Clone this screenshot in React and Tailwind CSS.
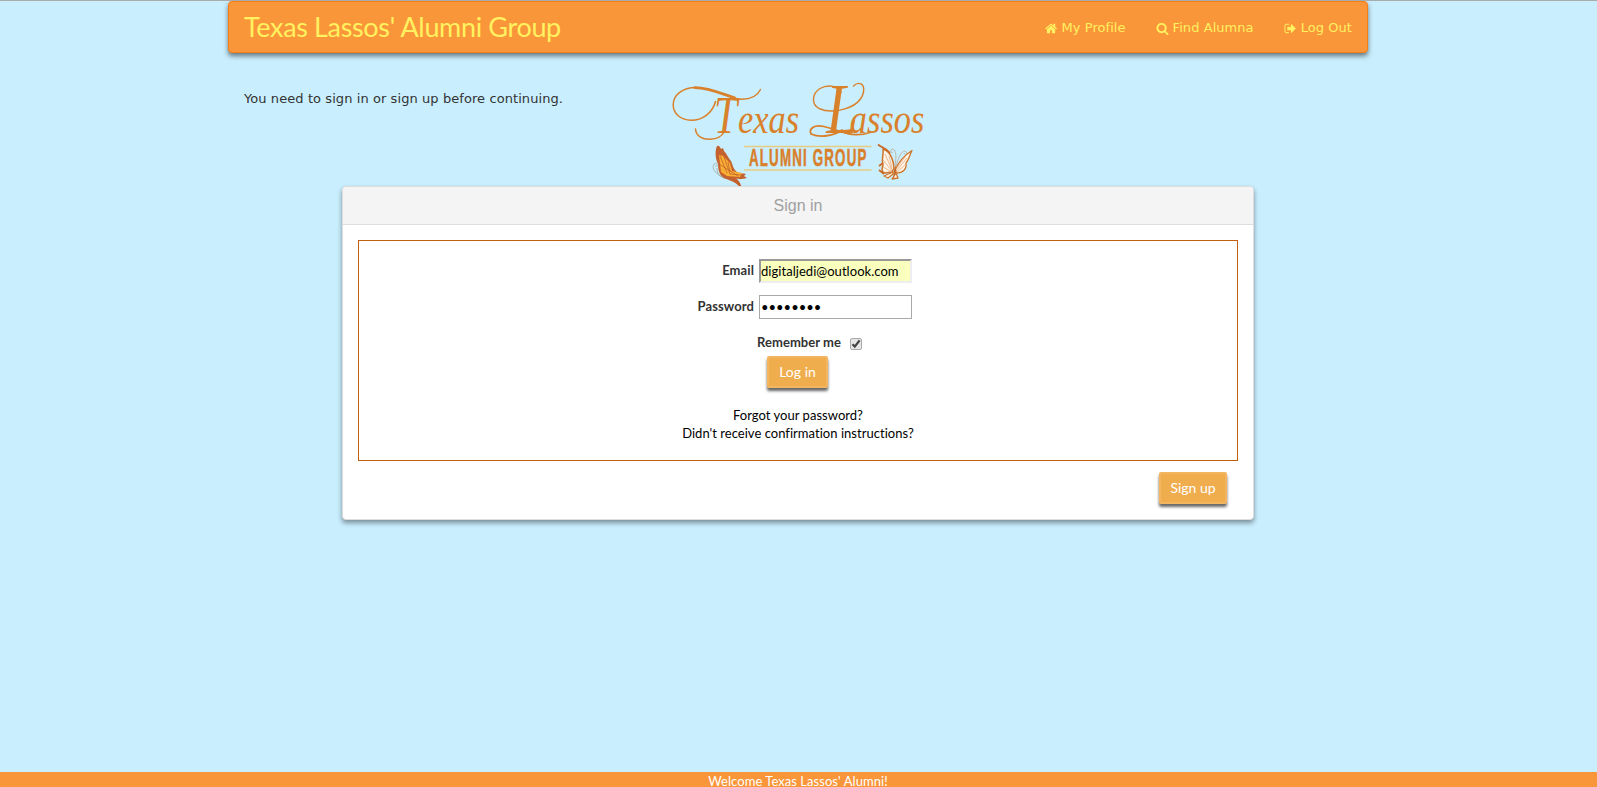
import React from "react";

const iconPaths = {
  home: "M1408 992v480q0 26-19 45t-45 19H960v-384H704v384H320q-26 0-45-19t-19-45V992q0-1 .5-3t.5-3l575-474 575 474q1 2 1 6zm223-69l-62 74q-8 9-21 11h-3q-13 0-21-7L832 424l-692 577q-12 8-24 7-13-2-21-11l-62-74q-8-10-7-23.500t11-21.500l719-599q32-26 76-26t76 26l244 204V288q0-14 9-23t23-9h192q14 0 23 9t9 23v408l219 182q10 8 11 21.500t-7 23.500z",
  search:
    "M1216 832q0-185-131.500-316.500T768 384 451.500 515.500 320 832t131.500 316.500T768 1280t316.500-131.500T1216 832zm512 832q0 52-38 90t-90 38q-54 0-90-38l-343-342q-179 124-399 124-143 0-273.500-55.500t-225-150-150-225T64 832t55.500-273.500 150-225 225-150T768 128t273.500 55.500 225 150 150 225T1472 832q0 220-124 399l343 343q37 37 37 90z",
  signOut:
    "M704 1440q0 4 1 20t.5 26.500-3 23.500-10 19.500-20.500 6.500H352q-119 0-203.500-84.500T64 1248V544q0-119 84.500-203.500T352 256h320q13 0 22.500 9.500T704 288q0 4 1 20t.5 26.500-3 23.500-10 19.500T672 384H352q-66 0-113 47t-47 113v704q0 66 47 113t113 47h312l11.500 1 11.500 3 8 5.500 7 9 2 13.500zm928-544q0 26-19 45l-544 544q-19 19-45 19t-45-19-19-45v-288H512q-26 0-45-19t-19-45V704q0-26 19-45t45-19h448V352q0-26 19-45t45-19 45 19l544 544q19 19 19 45z",
};

const Icon = ({ name }) => (
  <svg className="size-[13px]" viewBox="0 0 1792 1792" fill="currentColor">
    <path d={iconPaths[name]} />
  </svg>
);

const Logo = () => (
  <svg
    className="block h-[112px] w-[260px] overflow-visible"
    viewBox="668 76 260 112"
    fill="none"
    role="img"
    aria-label="Texas Lassos Alumni Group"
  >
    <g stroke="#d9802b" strokeLinecap="round">
      <path d="M715.500 101.500C712.500 113 702 120.500 691 120.300C680 120 673.200 113 673.200 105C673.200 95.500 682 87.500 696 87.500" strokeWidth="1.500" />
      <path d="M695 87.700C710 88 722 94 735 98" strokeWidth="2.800" />
      <path d="M735 98.800C748 100.500 757 97 760.500 89.500" strokeWidth="1.400" />
      <path d="M695.500 129C696 136 702 139.500 710 139.300C718 139 722 136 724 132" strokeWidth="1.500" />
      <path d="M841 92.500C840 86 828 84 820 88.500C812 93.500 811 104 819 108.500C832 114.500 860 109 863.500 92C865 83.500 858.500 81 853.500 86" strokeWidth="1.400" />
      <path d="M842 130C834 136 820 138 811 134C808.500 129 814 124 824 126.500C842 131 852 138.500 870 132.500" strokeWidth="1.800" />
    </g>
    <text fill="#d9802b" fontFamily="Liberation Serif, serif" fontStyle="italic" transform="translate(714 133) scale(.8 1)">
      <tspan fontSize="52">T</tspan>
      <tspan fontSize="43" dx="1">exas</tspan>
      <tspan fontSize="71" dx="34">L</tspan>
      <tspan fontSize="43" dx="-10">assos</tspan>
    </text>
    <path d="M744 146.500H871.500M744 170H871.500" stroke="#e8cc82" strokeWidth="1.600" />
    <text
      fill="#d9802b"
      stroke="#d9802b"
      strokeWidth=".5"
      fontFamily="Liberation Sans, sans-serif"
      fontSize="23.500"
      fontWeight="700"
      letterSpacing="2"
      transform="translate(749 166) scale(.57 1)"
    >
      ALUMNI GROUP
    </text>
    <g>
      <path d="M717 146C719 145 720 147 721 149L723 148L724 151C727 154 729 159 731 161C733 165 733 169 737 172C741 174 743 173 746 174L744 176L747 178C742 179 739 180 736 178C740 182 741 184 741 187C735 182 729 179 723 178C719 174 718 169 718 164C715 158 715 150 717 146Z" fill="#c4622f" />
      <path d="M719 155L723 156L730 163L732 171L742 173L740 177L727 176L721 172Z" fill="#f8ae33" />
      <path d="M720 156L727 173M724 157L730 174M719 164L738 176M728 162L730 172M730 174L741 175" stroke="#c4622f" strokeWidth=".8" />
      <path d="M725 178C719 177 717 174 717 168M723 177C716 174 711 169 714 164C718 161 718 168 715 166" stroke="#a4aaa1" strokeWidth=".8" />
      <path d="M724 177L736 182L741 187" stroke="#c4622f" strokeWidth="1.600" />
    </g>
    <g strokeLinejoin="round">
      <path d="M883 149C889 151 893 157 894 168L892 172L885 173C881 172 882 168 883 165C881 159 884 154 883 149Z" fill="#fff4e7" stroke="#cf752b" strokeWidth="1.500" />
      <path d="M895 170C899 161 905 155 912 150.500C909 156 909 160 906 163C907 169 903 173 896 173Z" fill="#fff4e7" stroke="#cf752b" strokeWidth="1.300" />
      <path d="M893 172L884 176L888 178L893 174ZM896 173L898 178L892 179Z" fill="#fff4e7" stroke="#cf752b" strokeWidth="1.300" />
      <path d="M892 170L885 154M892 171L883 160M892 172L883 167M892 168L889 156M896 171L907 158M897 172L905 165M896 169L905 157" stroke="#dfa16d" strokeWidth=".7" />
      <path d="M878 144.500C882 148 886 148 890 153M879 166L883 163M879 170L884 174" stroke="#c96c28" strokeWidth="1.800" />
      <path d="M894 170L895.500 165L896.500 172L893 179Z" fill="#c96c28" />
      <path d="M895 166C896 159 897 151 893 149C889 149 891 154 893 152M896 166C898 159 901 151 905 151C909 153 905 156 904 153" stroke="#b9aa91" strokeWidth=".8" />
    </g>
  </svg>
);

const buttonClass =
  "flex h-[32px] items-center justify-center rounded-[2px] border-2 border-[#f3b55f] bg-[#f0ad4e] text-[14px] leading-none text-white shadow-[0_3px_3px_rgba(0,0,0,0.6)]";

export default function App() {
  return (
    <div className="flex h-[787px] w-full flex-col items-center overflow-hidden border-t border-[#a9abad] bg-[#c9eefe] font-[Lato,sans-serif] text-[#333] [font-variant-ligatures:none]">
      <div className="flex w-full flex-col items-center pr-px">
        <nav className="flex h-[52px] w-[1140px] shrink-0 items-center justify-between rounded-[4px] border border-[#f57f17] bg-[#fa963a] px-[15px] text-[#fff15f] shadow-[0_3px_5px_rgba(0,0,0,0.5)]">
          <a className="pb-[2px] text-[27px] leading-none tracking-[-0.35px]">Texas Lassos&apos; Alumni Group</a>
          <div className="flex gap-[30px] pt-[2px] font-['DejaVu_Sans',sans-serif] text-[13px] tracking-[0.06px]">
            <a className="flex items-center gap-[4px]">
              <Icon name="home" />
              My Profile
            </a>
            <a className="flex items-center gap-[4px]">
              <Icon name="search" />
              Find Alumna
            </a>
            <a className="flex items-center gap-[4px]">
              <Icon name="signOut" />
              Log Out
            </a>
          </div>
        </nav>

        <div className="mt-[23px] grid h-[110px] w-[1140px] shrink-0 grid-cols-[440px_260px_440px]">
          <p className="pt-[13px] pl-[16px] font-['DejaVu_Sans',sans-serif] text-[13px] leading-[20px] tracking-[0.08px]">
            You need to sign in or sign up before continuing.
          </p>
          <Logo />
        </div>

        <main className="z-10 h-[334px] w-[912px] shrink-0 rounded-[4px] border border-[#ddd] bg-white shadow-[0_3px_5px_rgba(0,0,0,0.4)]">
          <h1 className="flex h-[38px] items-center justify-center rounded-t-[3px] border-b border-[#ddd] bg-[#f4f4f4] font-['Liberation_Sans',sans-serif] text-[16px] text-[#a0a0a0]">
            Sign in
          </h1>
          <form className="mx-[15px] mt-[15px] flex h-[221px] flex-col items-center border border-[#c15f0d] pt-[18px] text-[13px]">
            <div className="ml-[339px] flex h-[24px] w-[214px] items-center justify-end gap-[5px] self-start">
              <label className="font-bold tracking-[0.1px]">Email</label>
              <input
                className="h-[24px] w-[153px] border-2 border-t-[#999] border-r-[#eee] border-b-[#eee] border-l-[#999] bg-[#faffbd] text-[13px] tracking-[0.04px] text-black outline-none"
                defaultValue="digitaljedi@outlook.com"
              />
            </div>
            <div className="mt-[12px] ml-[339px] flex h-[24px] w-[214px] items-center justify-end gap-[5px] self-start">
              <label className="font-bold tracking-[0.1px]">Password</label>
              <input
                type="password"
                className="h-[24px] w-[153px] border border-[#a9a9a9] bg-white px-px text-[13px] text-black outline-none"
                defaultValue="12345678"
              />
            </div>
            <div className="mt-[14px] ml-[398px] flex h-[20px] items-center gap-[9px] self-start">
              <label className="font-bold tracking-[0.05px]">Remember me</label>
              <span className="mt-px flex size-[12px] items-center justify-center rounded-[2px] border border-[#aaa] bg-[#e6e6e6]">
                <svg className="size-[10px]" viewBox="0 0 10 10" fill="none" stroke="#444" strokeWidth="2.300">
                  <path d="M1.500 5.200L3.800 7.600L8.600 1.400" />
                </svg>
              </span>
            </div>
            <button type="button" className={buttonClass + " mt-[3px] mr-px w-[61px]"}>
              Log in
            </button>
            <div className="mt-[18px] flex flex-col items-center leading-[18px] tracking-[0.03px] text-black">
              <a>Forgot your password?</a>
              <a>Didn&apos;t receive confirmation instructions?</a>
            </div>
          </form>
          <div className="mt-[11px] mr-[26px] flex justify-end">
            <button type="button" className={buttonClass + " w-[68px]"}>
              Sign up
            </button>
          </div>
        </main>
      </div>

      <footer className="mt-auto flex h-[15px] w-full shrink-0 items-center justify-center bg-[#fa963a] pt-[3px] pr-px text-[13px] leading-[18px] tracking-[0.05px] text-white">
        Welcome Texas Lassos&apos; Alumni!
      </footer>
    </div>
  );
}
